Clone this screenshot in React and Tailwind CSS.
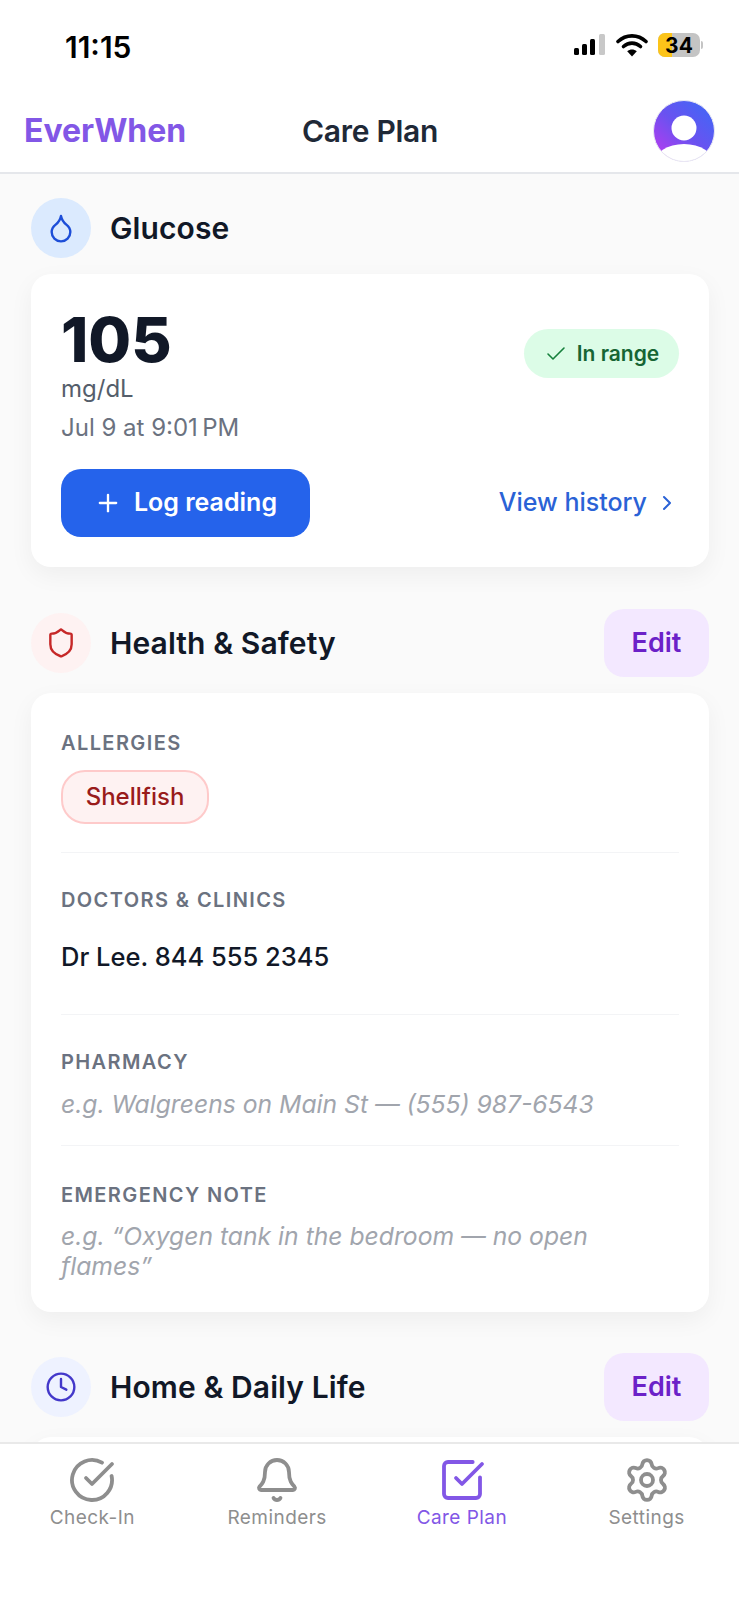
import React from 'react';
import { Droplet, Shield, Clock, Check, Plus, ChevronRight, CircleCheckBig, Bell, SquareCheckBig, Settings } from 'lucide-react';

const SectionHead = ({ icon: Icon, circle, color, title, edit }) => (
  <div className="flex items-center justify-between">
    <div className="flex items-center gap-[19px]">
      <div className={`flex h-[60px] w-[60px] items-center justify-center rounded-full ${circle}`}>
        <Icon className={`h-[32px] w-[32px] ${color}`} strokeWidth={1.8} />
      </div>
      <h2 className="text-[30px] font-semibold tracking-[0.1px] text-[#111827]">{title}</h2>
    </div>
    {edit && (
      <button className="flex h-[68px] w-[105px] items-center justify-center rounded-[20px] bg-[#f3e8ff] text-[27px] font-semibold text-[#6b21c8]">
        Edit
      </button>
    )}
  </div>
);

const Label = ({ children }) => (
  <div className="text-[20px] leading-[24px] font-semibold tracking-[1.4px] text-[#6b7280]">{children}</div>
);

const tabs = [
  { label: 'Check-In', icon: CircleCheckBig },
  { label: 'Reminders', icon: Bell },
  { label: 'Care Plan', icon: SquareCheckBig, active: true },
  { label: 'Settings', icon: Settings },
];

const App = () => {
  return (
    <div className="flex h-[1600px] w-[739px] flex-col overflow-hidden bg-white font-['Inter',sans-serif]">
      {/* status bar */}
      <div className="flex h-[90px] shrink-0 items-start justify-between pt-[30px] pr-[36px] pl-[65px]">
        <span className="text-[30px] leading-[34px] font-semibold text-black">11:15</span>
        <div className="flex items-center gap-[10px] pt-[3px]">
          <svg width="33" height="24" viewBox="0 0 33 24">
            <rect x="1" y="15" width="5" height="7" rx="1.5" fill="#000" />
            <rect x="9" y="11" width="5" height="11" rx="1.5" fill="#000" />
            <rect x="17" y="6" width="5" height="16" rx="1.5" fill="#000" />
            <rect x="26" y="1" width="6" height="21" rx="1.5" fill="#c8c8c8" />
          </svg>
          <svg width="32" height="24" viewBox="0 0 32 24">
            <path d="M2 8.5C10 1 22 1 30 8.5" fill="none" stroke="#000" strokeWidth="3.6" strokeLinecap="round" />
            <path d="M7.5 13.5C12.5 9 19.5 9 24.5 13.5" fill="none" stroke="#000" strokeWidth="3.6" strokeLinecap="round" />
            <path d="M16 23.5L11.2 18.2C14 16 18 16 20.8 18.2Z" fill="#000" />
          </svg>
          <div className="flex items-center gap-[1px]">
            <div className="relative flex h-[24px] w-[42px] items-center justify-center overflow-hidden rounded-[7px] bg-[#c4c4c4]">
              <div className="absolute top-0 bottom-0 left-0 w-[14px] bg-[#fcc419]" />
              <span className="relative text-[21px] leading-none font-bold text-black">34</span>
            </div>
            <div className="h-[8px] w-[2px] rounded-r-full bg-[#c4c4c4]" />
          </div>
        </div>
      </div>

      {/* header */}
      <header className="relative flex h-[84px] shrink-0 items-center justify-between border-b-2 border-[#e5e7eb] pr-[24px] pl-[24px]">
        <span className="text-[32px] font-bold text-[#8257e6]">EverWhen</span>
        <span className="absolute top-[18px] left-[302px] text-[30px] leading-[46px] font-semibold tracking-[-0.3px] text-[#1f2937]">Care Plan</span>
        <svg width="62" height="62" viewBox="0 0 62 62">
          <defs>
            <linearGradient id="av" x1="0.75" y1="0.1" x2="0.1" y2="0.8">
              <stop offset="0" stopColor="#4a62f5" />
              <stop offset="0.5" stopColor="#6a52f0" />
              <stop offset="1" stopColor="#a83ff0" />
            </linearGradient>
            <clipPath id="avc"><circle cx="31" cy="31" r="30.5" /></clipPath>
          </defs>
          <circle cx="31" cy="31" r="30.5" fill="url(#av)" />
          <circle cx="31" cy="28" r="12.5" fill="#fff" />
          <ellipse cx="31" cy="64" rx="30" ry="20" fill="#fff" clipPath="url(#avc)" />
          <circle cx="31" cy="31" r="30.5" fill="none" stroke="#e9e9f2" strokeWidth="1" />
        </svg>
      </header>

      {/* content */}
      <main className="flex min-h-0 flex-1 flex-col overflow-hidden bg-[#fafafa] pt-[24px] pr-[30px] pl-[31px]">
        <SectionHead icon={Droplet} circle="bg-[#dbeafe]" color="text-[#1d4ed8]" title="Glucose" />

        <section className="mt-[16px] mb-[42px] shrink-0 rounded-[20px] bg-white px-[30px] pt-[36px] pb-[30px] shadow-[0_8px_24px_rgba(0,0,0,0.05)]">
          <div className="flex items-start justify-between">
            <div>
              <div className="text-[62px] leading-[60px] font-extrabold text-[#111827]">105</div>
              <div className="mt-[6px] text-[24px] leading-[26px] text-[#555e6b]">mg/dL</div>
              <div className="mt-[13px] text-[24px] leading-[26px] text-[#6b7280]">Jul 9 at 9:01{'\u202f'}PM</div>
            </div>
            <div className="mt-[19px] flex h-[49px] w-[155px] items-center justify-center gap-[9px] rounded-full bg-[#dcfce7]">
              <Check className="h-[24px] w-[24px] text-[#16803c]" strokeWidth={1.6} />
              <span className="text-[21px] font-semibold text-[#166534]">In range</span>
            </div>
          </div>
          <div className="mt-[28px] flex items-center justify-between">
            <button className="flex h-[68px] w-[249px] items-center justify-center gap-[12px] rounded-[20px] bg-[#2563eb] text-[25px] font-semibold text-white">
              <Plus className="h-[28px] w-[28px]" strokeWidth={2} />
              Log reading
            </button>
            <div className="flex items-center gap-[8px] text-[25px] font-medium text-[#2a62d6]">
              View history
              <ChevronRight className="h-[24px] w-[24px]" strokeWidth={2} />
            </div>
          </div>
        </section>

        <SectionHead icon={Shield} circle="bg-[#fef2f2]" color="text-[#c62828]" title="Health & Safety" edit />

        <section className="mt-[16px] mb-[41px] shrink-0 rounded-[20px] bg-white px-[30px] shadow-[0_8px_24px_rgba(0,0,0,0.05)]">
          <div className="border-b border-[#f3f4f6] pt-[38px] pb-[28px]">
            <Label>ALLERGIES</Label>
            <div className="mt-[15px] flex h-[54px] w-[148px] items-center justify-center rounded-[24px] border-2 border-[#fecaca] bg-[#fef2f2] text-[24px] font-medium text-[#991b1b]">
              Shellfish
            </div>
          </div>
          <div className="border-b border-[#f3f4f6] pt-[35px] pb-[41px]">
            <Label>DOCTORS &amp; CLINICS</Label>
            <div className="mt-[29px] text-[25.5px] leading-[32px] font-medium text-[#111827]">Dr Lee. 844 555 2345</div>
          </div>
          <div className="border-b border-[#f3f4f6] pt-[35px] pb-[25px]">
            <Label>PHARMACY</Label>
            <div className="mt-[14px] text-[24.7px] leading-[32px] text-[#a1a5ad] italic">e.g. Walgreens on Main St — (555) 987-6543</div>
          </div>
          <div className="pt-[37px] pb-[31px]">
            <Label>EMERGENCY NOTE</Label>
            <div className="mt-[14px] text-[24.7px] leading-[30px] text-[#a1a5ad] italic">e.g. “Oxygen tank in the bedroom — no open flames”</div>
          </div>
        </section>

        <SectionHead icon={Clock} circle="bg-[#eef2ff]" color="text-[#4338ca]" title="Home & Daily Life" edit />

        <section className="mt-[16px] h-[60px] shrink-0 rounded-[20px] bg-white shadow-[0_8px_24px_rgba(0,0,0,0.05)]" />
      </main>

      {/* tab bar */}
      <nav className="grid h-[158px] shrink-0 grid-cols-4 border-t-2 border-[#e9e9e9] bg-white pt-[12px]">
        {tabs.map((tab) => {
          const Icon = tab.icon;
          return (
            <div key={tab.label} className={`flex flex-col items-center ${tab.active ? 'text-[#8257e6]' : 'text-[#8e8e8e]'}`}>
              <Icon className="h-[48px] w-[48px]" strokeWidth={1.9} />
              <span className="mt-[2px] text-[19px] leading-[24px] font-normal tracking-[0.45px]">{tab.label}</span>
            </div>
          );
        })}
      </nav>
    </div>
  );
};

export default App;
